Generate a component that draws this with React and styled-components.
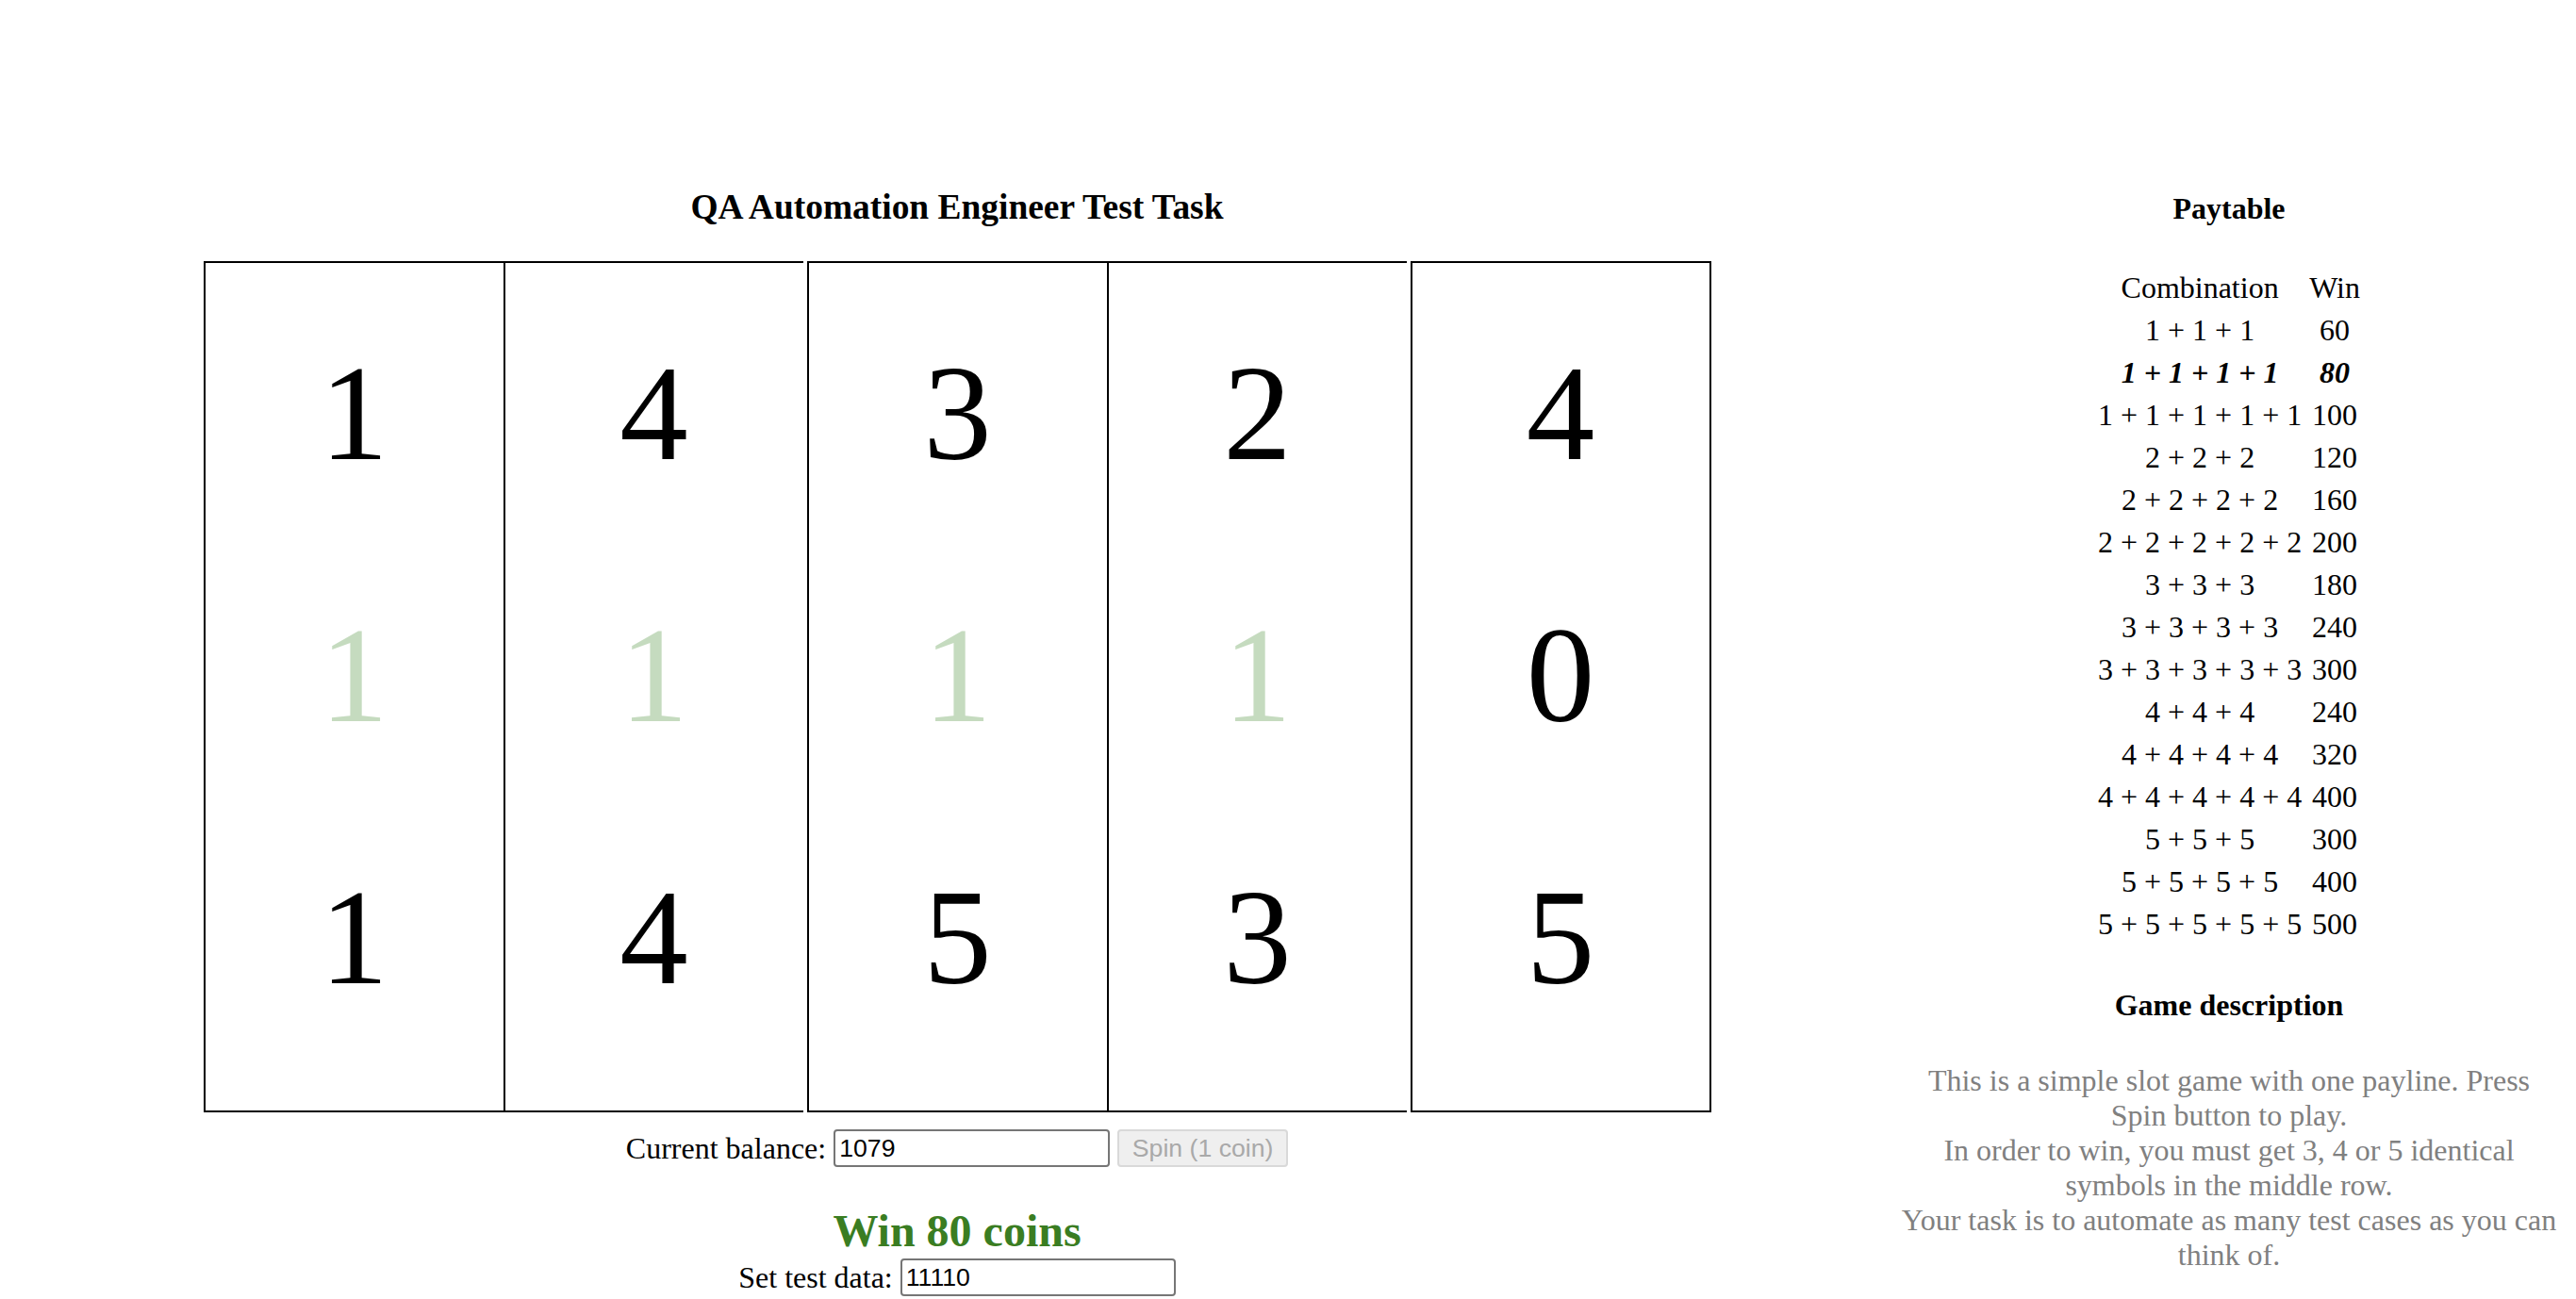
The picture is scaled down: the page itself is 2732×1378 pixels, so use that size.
import React from "react";
import styled, { createGlobalStyle } from "styled-components";

const GlobalStyle = createGlobalStyle`
  html, body {
    overflow: hidden;
  }
  body {
    margin: 16px;
    background: #fff;
    color: #000;
    font-family: "Liberation Serif", "Times New Roman", serif;
    font-size: 32px;
  }
`;

const Page = styled.div`
  display: flex;
  align-items: flex-start;
  padding-top: 180px;
`;

const GameColumn = styled.main`
  flex: 1;
  display: flex;
  flex-direction: column;
  align-items: center;
`;

const Title = styled.h3`
  margin: 2px 0 36px;
  font-size: 37.44px;
  line-height: 43px;
  font-weight: bold;
`;

const ReelRow = styled.div`
  display: flex;
`;

const Reel = styled.div`
  box-sizing: border-box;
  width: ${(p) => (p.$last ? "319px" : "318px")};
  height: 903px;
  margin-left: ${(p) => (p.$gap ? "4px" : "0")};
  padding-top: 20px;
  border: 2px solid #000;
  border-right-width: ${(p) => (p.$last ? "2px" : "0")};
  display: flex;
  flex-direction: column;
  align-items: center;
`;

const Symbol = styled.div`
  font-size: 145px;
  line-height: 278px;
  height: 278px;
  color: ${(p) => (p.$win ? "#c5dbbf" : "#000")};
`;

const ControlRow = styled.div`
  display: flex;
  align-items: center;
  gap: 8px;
  margin-top: ${(p) => p.$top || "0"};
  height: 40px;
`;

const Label = styled.span`
  font-size: 32px;
  white-space: nowrap;
`;

const TextInput = styled.input`
  box-sizing: border-box;
  width: ${(p) => p.$width || "293px"};
  height: 40px;
  padding: 0 4px;
  border: 2px solid #767676;
  border-radius: 4px;
  font-family: "Liberation Sans", Arial, sans-serif;
  font-size: 26.67px;
  color: #000;
  background: #fff;
`;

const SpinButton = styled.button`
  box-sizing: border-box;
  width: 181px;
  height: 40px;
  padding: 0 12px;
  border: 2px solid #d9d9d9;
  border-radius: 4px;
  background: #efefef;
  color: #a9a9a9;
  font-family: "Liberation Sans", Arial, sans-serif;
  font-size: 26.67px;
`;

const WinText = styled.h2`
  margin: 40px 0 2px;
  font-size: 48px;
  line-height: 55px;
  font-weight: bold;
  color: #3a7d22;
`;

const SideColumn = styled.aside`
  width: 700px;
  margin-right: 2px;
  padding-top: 7px;
  display: flex;
  flex-direction: column;
  align-items: center;
`;

const SideTitle = styled.h4`
  margin: ${(p) => p.$margin};
  font-size: 32px;
  line-height: 37px;
  font-weight: bold;
`;

const PayTable = styled.table`
  border-spacing: 4px;
  font-size: 32px;

  td {
    padding: 2px;
    line-height: 37px;
    text-align: center;
  }
`;

const PayRow = styled.tr`
  font-weight: ${(p) => (p.$active ? "bold" : "normal")};
  font-style: ${(p) => (p.$active ? "italic" : "normal")};
`;

const Description = styled.p`
  margin: 43px 0 0;
  font-size: 32px;
  line-height: 37px;
  color: #808080;
  text-align: center;
`;

const reels = [
  [1, 1, 1],
  [4, 1, 4],
  [3, 1, 5],
  [2, 1, 3],
  [4, 0, 5],
];
const gaps = [false, false, true, false, true];

const paytable = [
  ["1 + 1 + 1", 60],
  ["1 + 1 + 1 + 1", 80, true],
  ["1 + 1 + 1 + 1 + 1", 100],
  ["2 + 2 + 2", 120],
  ["2 + 2 + 2 + 2", 160],
  ["2 + 2 + 2 + 2 + 2", 200],
  ["3 + 3 + 3", 180],
  ["3 + 3 + 3 + 3", 240],
  ["3 + 3 + 3 + 3 + 3", 300],
  ["4 + 4 + 4", 240],
  ["4 + 4 + 4 + 4", 320],
  ["4 + 4 + 4 + 4 + 4", 400],
  ["5 + 5 + 5", 300],
  ["5 + 5 + 5 + 5", 400],
  ["5 + 5 + 5 + 5 + 5", 500],
];

export default function App() {
  return (
    <>
      <GlobalStyle />
      <Page>
        <GameColumn>
          <Title>QA Automation Engineer Test Task</Title>
          <ReelRow>
            {reels.map((reel, i) => (
              <Reel key={i} $gap={gaps[i]} $last={i === reels.length - 1}>
                {reel.map((s, j) => (
                  <Symbol key={j} $win={j === 1 && i < 4}>
                    {s}
                  </Symbol>
                ))}
              </Reel>
            ))}
          </ReelRow>
          <ControlRow $top="18px">
            <Label>Current balance:</Label>
            <TextInput type="text" defaultValue="1079" />
            <SpinButton disabled>Spin (1 coin)</SpinButton>
          </ControlRow>
          <WinText>Win 80 coins</WinText>
          <ControlRow>
            <Label>Set test data:</Label>
            <TextInput type="text" defaultValue="11110" $width="292px" />
          </ControlRow>
        </GameColumn>
        <SideColumn>
          <SideTitle $margin="0 0 41px">Paytable</SideTitle>
          <PayTable>
            <tbody>
              <tr>
                <td>Combination</td>
                <td>Win</td>
              </tr>
              {paytable.map(([combo, win, active]) => (
                <PayRow key={combo} $active={active}>
                  <td>{combo}</td>
                  <td>{win}</td>
                </PayRow>
              ))}
            </tbody>
          </PayTable>
          <SideTitle $margin="43px 0 0">Game description</SideTitle>
          <Description>
            This is a simple slot game with one payline. Press Spin button to play.
            <br />
            In order to win, you must get 3, 4 or 5 identical symbols in the middle row.
            <br />
            Your task is to automate as many test cases as you can think of.
          </Description>
        </SideColumn>
      </Page>
    </>
  );
}
